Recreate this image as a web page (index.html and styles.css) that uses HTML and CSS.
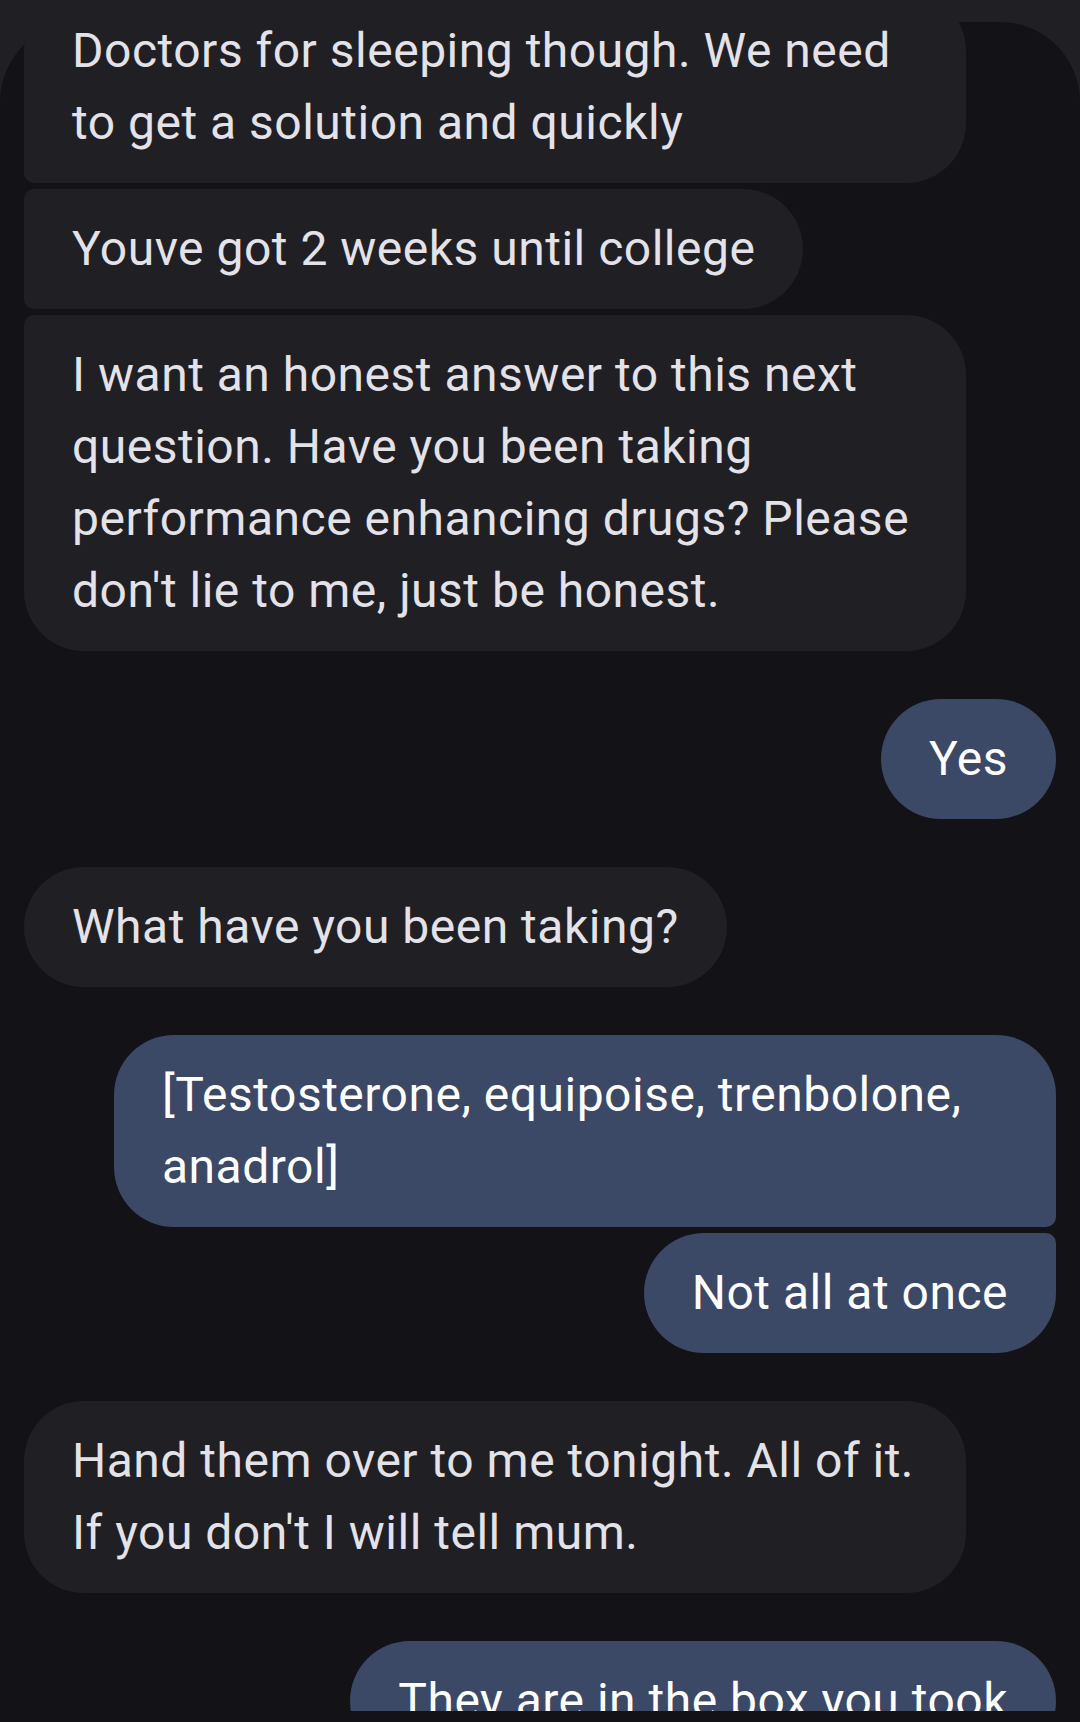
FILE: index.html
```html
<!DOCTYPE html>
<html lang="en">
<head>
<meta charset="utf-8">
<title>Messages</title>
<link rel="stylesheet" href="styles.css">
</head>
<body>
<div class="screen">
  <div class="chat">
    <div class="panel">
      <div class="messages">
        <div class="group in">
          <div class="bubble in first">Doctors for sleeping though. We need to get a solution and quickly</div>
          <div class="bubble in mid">Youve got 2 weeks until college</div>
          <div class="bubble in last">I want an honest answer to this next question. Have you been taking performance enhancing drugs? Please don't lie to me, just be honest.</div>
        </div>
        <div class="group out">
          <div class="bubble out">Yes</div>
        </div>
        <div class="group in">
          <div class="bubble in">What have you been taking?</div>
        </div>
        <div class="group out">
          <div class="bubble out first">[Testosterone, equipoise, trenbolone, anadrol]</div>
          <div class="bubble out last">Not all at once</div>
        </div>
        <div class="group in">
          <div class="bubble in">Hand them over to me tonight. All of it. If you don't I will tell mum.</div>
        </div>
        <div class="group out">
          <div class="bubble out">They are in the box you took</div>
        </div>
      </div>
    </div>
  </div>
  <div class="footer"></div>
</div>
</body>
</html>
```
FILE: styles.css
```css
html, body {
  margin: 0;
  padding: 0;
  background: #1f1f24;
}

.screen {
  width: 1080px;
  height: 1722px;
  overflow: hidden;
  background: #1f1f24;
  font-family: Roboto, "Noto Sans", sans-serif;
}

.chat {
  height: 1711px;
  overflow: hidden;
  padding-top: 22px;
  box-sizing: border-box;
}

.panel {
  display: flow-root;
  height: 100%;
  background: #131317;
  border-radius: 80px 80px 0 0;
}

.messages {
  display: flex;
  flex-direction: column;
  gap: 48px;
  padding: 0 24px;
  margin-top: -31px;
}

.group {
  display: flex;
  flex-direction: column;
  gap: 6px;
}

.group.in {
  align-items: flex-start;
}

.group.out {
  align-items: flex-end;
}

.bubble {
  max-width: 942px;
  box-sizing: border-box;
  padding: 24px 48px;
  font-size: 48px;
  line-height: 72px;
  letter-spacing: 0.5px;
  border-radius: 60px;
}

.bubble.in {
  background: #1f1f24;
  color: #e4e2e9;
}

.bubble.out {
  background: #3b4866;
  color: #ffffff;
}

.bubble.in.first {
  border-bottom-left-radius: 10px;
}

.bubble.in.mid {
  border-top-left-radius: 10px;
  border-bottom-left-radius: 10px;
}

.bubble.in.last {
  border-top-left-radius: 10px;
}

.bubble.out.first {
  border-bottom-right-radius: 10px;
}

.bubble.out.last {
  border-top-right-radius: 10px;
}

.footer {
  height: 11px;
  background: #131317;
}
```
